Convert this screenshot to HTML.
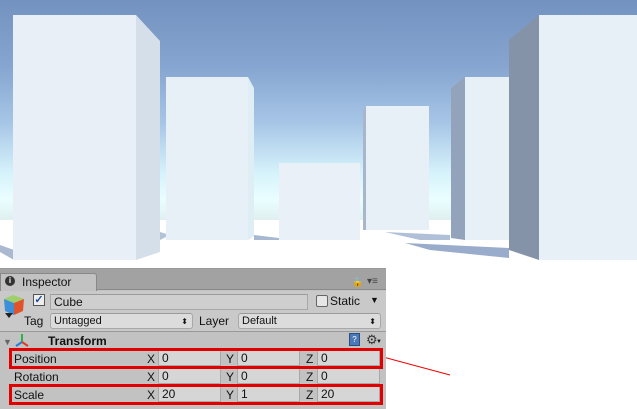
<!DOCTYPE html>
<html><head><style>
*{margin:0;padding:0;box-sizing:border-box}
body{width:637px;height:409px;position:relative;overflow:hidden;background:#fff;font-family:"Liberation Sans",sans-serif;font-size:11px;color:#111}
.a{position:absolute}
.f{position:absolute;background:#d6d6d6;border:1px solid #a8a8a8;border-top-color:#9a9a9a;height:16px;padding-left:3px;line-height:15px;font-size:12px}
.l{position:absolute;font-size:11px}
.red{position:absolute;border:3px solid #e00000}
</style></head><body>
<div class="a" style="left:0;top:0;width:637px;height:222px;background:linear-gradient(#7392bf 0%,#86a5d0 30%,#a6c5e6 55%,#d6f2fb 78%,#eafeff 90%,#dfeeee 100%)"></div>
<div class="a" style="left:0;top:220px;width:637px;height:50px;background:#fff"></div>
<svg class="a" style="left:0;top:0" width="637" height="268">
<polygon points="0,245 14,250 14,260 0,252" fill="#aab8d0"/>
<polygon points="160,232 170,235 160,240" fill="#b4c2d8"/>
<polygon points="254,235 279,238 279,240 254,240" fill="#a8b8d2"/>
<polygon points="385,232 450,235 450,240 420,240" fill="#b0c0d8"/>
<polygon points="405,243 509,248 509,258 430,250" fill="#9aaccb"/>
<rect x="13" y="15" width="123" height="245" fill="#e8eff6"/>
<polygon points="136,15 160,41 160,252 136,260" fill="#d4dfea"/>
<rect x="166" y="77" width="82" height="163" fill="#e8f0f7"/>
<polygon points="248,77 254,88 254,236 248,240" fill="#dfeef4"/>
<rect x="279" y="163" width="81" height="77" fill="#e9f0f7"/>
<polygon points="363,110 366,106 366,230 363,230" fill="#a8b6cc"/>
<rect x="366" y="106" width="63" height="124" fill="#e8f0f7"/>
<polygon points="451,88 465,77 465,240 451,238" fill="#94a3bc"/>
<rect x="465" y="77" width="44" height="163" fill="#e8f0f7"/>
<polygon points="509,40 539,15 539,260 509,250" fill="#8593a9"/>
<rect x="539" y="15" width="98" height="245" fill="#e8f0f7"/>
</svg>
<svg class="a" style="left:383px;top:354px" width="70" height="24"><line x1="0" y1="3" x2="67" y2="21" stroke="#e00"/></svg>
<div class="a" style="left:0;top:268px;width:386px;height:141px;background:#c2c2c2;border-top:1px solid #9a9a9a"></div>
<div class="a" style="left:0;top:269px;width:386px;height:21px;background:#a2a2a2;border-bottom:1px solid #8a8a8a"></div>
<div class="a" style="left:0;top:273px;width:97px;height:18px;background:#c2c2c2;border:1px solid #888;border-bottom:none;border-radius:0 3px 0 0"></div>
<div class="a" style="left:5px;top:276px;width:10px;height:10px;border-radius:50%;background:#333;color:#fff;font-size:8px;font-weight:bold;text-align:center;line-height:10px">i</div>
<div class="l" style="left:22px;top:275px;font-size:12px">Inspector</div>
<div class="l" style="left:352px;top:277px;font-size:9px;color:#444">&#128274;</div>
<div class="l" style="left:367px;top:276px;font-size:10px;color:#444">▾≡</div>
<div class="a" style="left:0;top:291px;width:386px;height:40px;background:#c9c9c9"></div>
<svg class="a" style="left:2px;top:294px" width="24" height="26">
<polygon points="2,5 11,1 22,5 12,9" fill="#9fcf6a"/>
<polygon points="2,5 12,9 12,21 3,17" fill="#3c8fd8"/>
<polygon points="12,9 22,5 21,17 12,21" fill="#e0522a"/>
<polygon points="3,19 11,19 7,24" fill="#222"/>
</svg>
<div class="a" style="left:33px;top:294px;width:12px;height:12px;background:#eee;border:1px solid #555;color:#1a4c9a;font-size:11px;line-height:10px;text-align:center;font-weight:bold">✓</div>
<div class="f" style="left:50px;top:294px;width:258px;background:#cfcfcf">Cube</div>
<div class="a" style="left:316px;top:295px;width:12px;height:12px;background:#e6e6e6;border:1px solid #666;border-radius:2px"></div>
<div class="l" style="left:330px;top:294px;font-size:12px">Static</div>
<div class="l" style="left:370px;top:295px;font-size:9px">▼</div>
<div class="l" style="left:24px;top:314px;font-size:12px">Tag</div>
<div class="f" style="left:50px;top:313px;width:143px;border-radius:3px;background:#dcdcdc;font-size:11px">Untagged<span style="position:absolute;right:4px;font-size:8px">⬍</span></div>
<div class="l" style="left:199px;top:314px;font-size:12px">Layer</div>
<div class="f" style="left:238px;top:313px;width:143px;border-radius:3px;background:#dcdcdc;font-size:11px">Default<span style="position:absolute;right:4px;font-size:8px">⬍</span></div>
<div class="a" style="left:0;top:331px;width:386px;height:1px;background:#999"></div>
<div class="l" style="left:3px;top:337px;font-size:9px;color:#666">▼</div>
<svg class="a" style="left:14px;top:333px" width="16" height="15"><line x1="8" y1="1" x2="8" y2="9" stroke="#2bb34a" stroke-width="2"/><line x1="8" y1="9" x2="2" y2="13" stroke="#2a7ad8" stroke-width="2"/><line x1="8" y1="9" x2="14" y2="13" stroke="#e03a2a" stroke-width="2"/></svg>
<div class="l" style="left:48px;top:334px;font-size:12px;font-weight:bold">Transform</div>
<div class="a" style="left:349px;top:333px;width:11px;height:13px;background:#4b78b8;border:1px solid #2b4e80;color:#fff;font-size:8px;text-align:center;line-height:11px">?</div>
<div class="l" style="left:366px;top:332px;font-size:13px;color:#333">⚙</div>
<div class="l" style="left:376px;top:339px;font-size:6px">▼</div>
<div class="l" style="left:14px;top:352px;font-size:12px">Position</div>
<div class="l" style="left:14px;top:370px;font-size:12px">Rotation</div>
<div class="l" style="left:14px;top:388px;font-size:12px">Scale</div>
<div class="l" style="left:147px;top:352px;font-size:12px">X</div><div class="f" style="left:158px;top:350px;width:63px">0</div>
<div class="l" style="left:226px;top:352px;font-size:12px">Y</div><div class="f" style="left:237px;top:350px;width:63px">0</div>
<div class="l" style="left:306px;top:352px;font-size:12px">Z</div><div class="f" style="left:317px;top:350px;width:63px">0</div>
<div class="l" style="left:147px;top:370px;font-size:12px">X</div><div class="f" style="left:158px;top:368px;width:63px">0</div>
<div class="l" style="left:226px;top:370px;font-size:12px">Y</div><div class="f" style="left:237px;top:368px;width:63px">0</div>
<div class="l" style="left:306px;top:370px;font-size:12px">Z</div><div class="f" style="left:317px;top:368px;width:63px">0</div>
<div class="l" style="left:147px;top:388px;font-size:12px">X</div><div class="f" style="left:158px;top:386px;width:63px">20</div>
<div class="l" style="left:226px;top:388px;font-size:12px">Y</div><div class="f" style="left:237px;top:386px;width:63px">1</div>
<div class="l" style="left:306px;top:388px;font-size:12px">Z</div><div class="f" style="left:317px;top:386px;width:63px">20</div>
<div class="red" style="left:9px;top:348px;width:374px;height:21px"></div>
<div class="red" style="left:9px;top:384px;width:374px;height:21px"></div>
</body></html>
